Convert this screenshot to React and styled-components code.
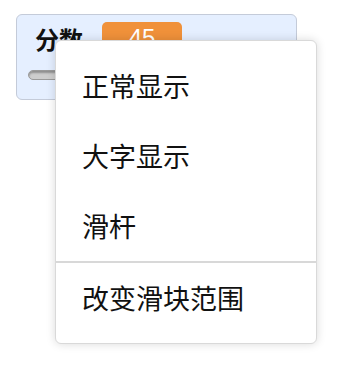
import React from "react";
import styled, { createGlobalStyle } from "styled-components";

// Scratch-style variable monitor with its right-click menu open

const GlobalStyle = createGlobalStyle`
  html, body {
    margin: 0;
    padding: 0;
    background: #ffffff;
  }
  body {
    font-family: "Noto Sans CJK SC", "Noto Sans", "Liberation Sans", sans-serif;
  }
`;

const Stage = styled.div`
  position: relative;
  width: 338px;
  height: 366px;
  overflow: hidden;
  padding: 14px 0 0 16px;
  box-sizing: border-box;
`;

const Monitor = styled.div`
  width: 281px;
  height: 86px;
  box-sizing: border-box;
  border: 1px solid #c4cbd9;
  border-radius: 6px;
  background: #e5efff;
  padding: 7px 0 0 11px;
`;

const Row = styled.div`
  display: flex;
  align-items: center;
  gap: 19px;
  padding-left: 7px;
  height: 32px;
`;

const Label = styled.span`
  font-size: 24px;
  font-weight: 700;
  color: #111;
`;

const Value = styled.span`
  width: 80px;
  height: 32px;
  line-height: 32px;
  border-radius: 5px;
  background: #f0913a;
  color: #fff;
  font-family: "Liberation Sans", Arial, sans-serif;
  font-size: 24px;
  text-align: center;
`;

const Track = styled.div`
  margin-top: 16px;
  width: 258px;
  height: 10px;
  box-sizing: border-box;
  border: 1px solid #9a9a9a;
  border-radius: 5px;
  background: #cdcdcd;
  box-shadow: inset 0 2px 2px rgba(0, 0, 0, 0.3);
`;

const Menu = styled.ul`
  position: absolute;
  left: 55px;
  top: 40px;
  width: 262px;
  box-sizing: border-box;
  margin: 0;
  padding: 10px 0;
  list-style: none;
  background: #fff;
  border: 1px solid #d9d9d9;
  border-radius: 6px;
  box-shadow: 0 0 10px rgba(0, 0, 0, 0.15);
`;

const Item = styled.li`
  height: 70px;
  line-height: 70px;
  padding-left: 26px;
  font-size: 27px;
  color: #111;
  border-top: ${(p) => (p.$divider ? "2px solid #d8d8d8" : "none")};
`;

const items = [
  { text: "正常显示" },
  { text: "大字显示" },
  { text: "滑杆" },
  { text: "改变滑块范围", divider: true },
];

export default function App() {
  return (
    <>
      <GlobalStyle />
      <Stage>
        <Monitor>
          <Row>
            <Label>分数</Label>
            <Value>45</Value>
          </Row>
          <Track />
        </Monitor>
        <Menu>
          {items.map((item, i) => (
            <Item key={i} $divider={item.divider}>
              {item.text}
            </Item>
          ))}
        </Menu>
      </Stage>
    </>
  );
}
